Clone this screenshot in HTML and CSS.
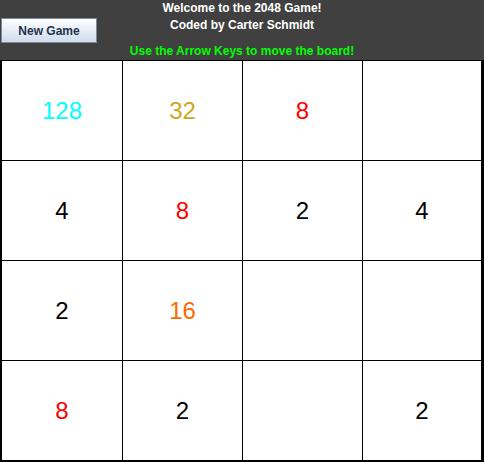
FILE: index.html
```html
<!DOCTYPE html>
<html>
<head>
<meta charset="utf-8">
<link rel="stylesheet" href="styles.css">
</head>
<body>
<div class="app">
  <header class="header">
    <button class="new-game">New Game</button>
    <div class="titles">
      <div class="title">Welcome to the 2048 Game!</div>
      <div class="title">Coded by Carter Schmidt</div>
      <div class="hint">Use the Arrow Keys to move the board!</div>
    </div>
  </header>
  <main class="board">
    <div class="cell c128">128</div>
    <div class="cell c32">32</div>
    <div class="cell c8">8</div>
    <div class="cell"></div>

    <div class="cell c4">4</div>
    <div class="cell c8">8</div>
    <div class="cell c2">2</div>
    <div class="cell c4">4</div>

    <div class="cell c2">2</div>
    <div class="cell c16">16</div>
    <div class="cell"></div>
    <div class="cell"></div>

    <div class="cell c8">8</div>
    <div class="cell c2">2</div>
    <div class="cell"></div>
    <div class="cell c2">2</div>
  </main>
</div>
</body>
</html>
```
FILE: styles.css
```css
html, body {
  margin: 0;
  padding: 0;
  background: #ffffff;
}
.app {
  width: 484px;
  height: 462px;
  display: flex;
  flex-direction: column;
  font-family: "Liberation Sans", Arial, sans-serif;
}
.header {
  height: 60px;
  background: #404040;
  display: grid;
}
.new-game,
.titles {
  grid-area: 1 / 1;
}
.new-game {
  justify-self: start;
  align-self: start;
  margin: 18px 0 0 1px;
  width: 96px;
  height: 25px;
  padding: 0;
  border: 1px solid #7a8a9c;
  background: linear-gradient(to bottom, #ffffff 0%, #eef3f9 35%, #cddcec 100%);
  font-family: "Liberation Sans", Arial, sans-serif;
  font-weight: bold;
  font-size: 12px;
  color: #23324a;
}
.titles {
  justify-self: center;
  text-align: center;
  font-weight: bold;
  font-size: 12px;
  line-height: 17px;
}
.title {
  color: #ffffff;
}
.hint {
  color: #00ff00;
  margin-top: 9px;
}
.board {
  flex: 1;
  background: #000000;
  padding: 1px 3px 2px 2px;
  display: grid;
  grid-template-columns: 120px 119px 119px 118px;
  grid-template-rows: repeat(4, 99px);
  gap: 1px;
}
.cell {
  background: #ffffff;
  display: flex;
  align-items: center;
  justify-content: center;
  font-size: 24px;
  color: #000000;
}
.c128 { color: #00ffff; }
.c32 { color: #cca820; }
.c8 { color: #ff0000; }
.c16 { color: #ff6a00; }
.c4, .c2 { color: #000000; }
```
